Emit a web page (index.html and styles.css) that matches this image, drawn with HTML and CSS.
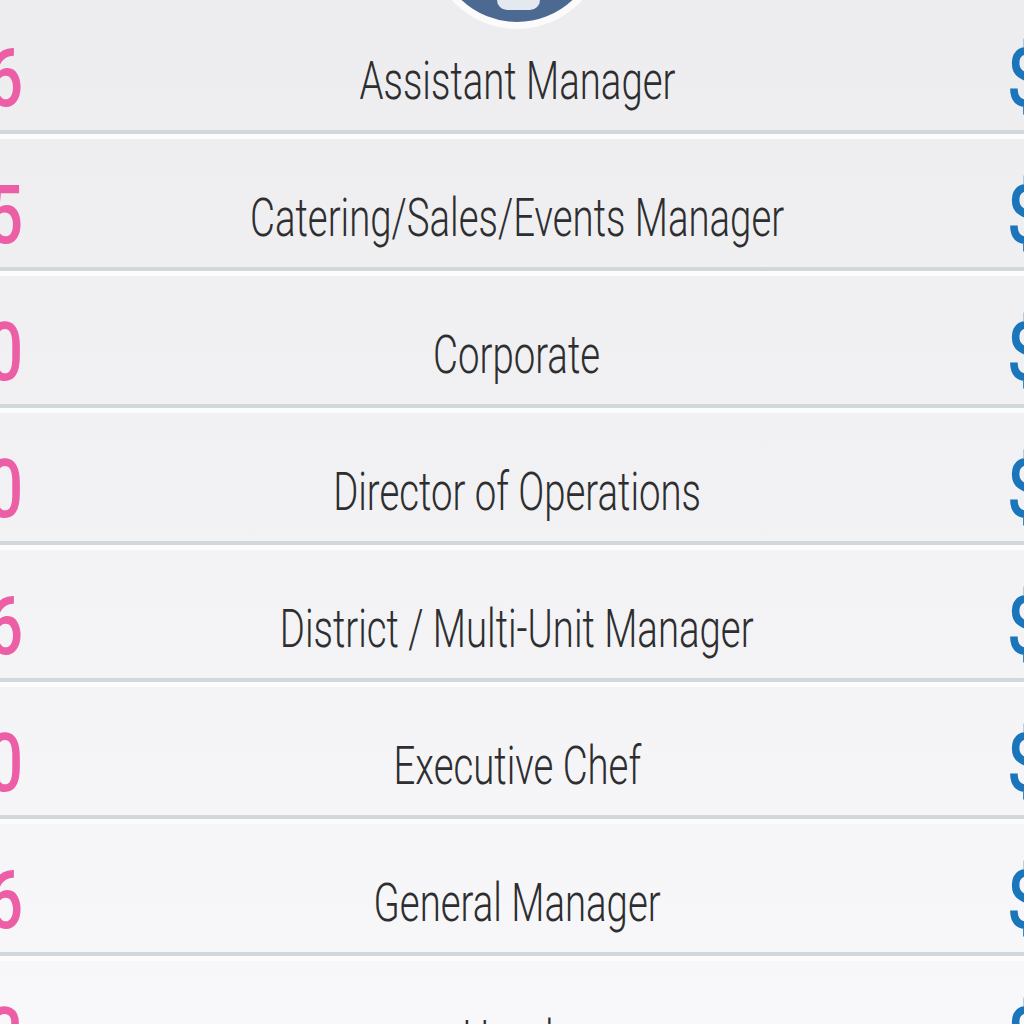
FILE: index.html
```html
<!DOCTYPE html>
<html lang="en">
<head>
<meta charset="utf-8">
<title>Salary by Position</title>
<link rel="stylesheet" href="styles.css">
</head>
<body>
<div class="page">
  <div class="avatar">
    <svg class="avatar-icon" width="162" height="162" viewBox="0 0 162 162" aria-hidden="true">
      <rect x="61" y="88" width="43" height="62" rx="10" fill="#e4e9f0"/>
    </svg>
  </div>
  <div class="table">
    <div class="row"><div class="count">1,236</div><div class="title"><span>Assistant Manager</span></div><div class="pay">$52,400</div></div>
    <div class="row"><div class="count">475</div><div class="title"><span>Catering/Sales/Events Manager</span></div><div class="pay">$55,100</div></div>
    <div class="row"><div class="count">310</div><div class="title"><span>Corporate</span></div><div class="pay">$78,900</div></div>
    <div class="row"><div class="count">120</div><div class="title"><span>Director of Operations</span></div><div class="pay">$96,300</div></div>
    <div class="row"><div class="count">256</div><div class="title"><span>District / Multi-Unit Manager</span></div><div class="pay">$85,700</div></div>
    <div class="row"><div class="count">380</div><div class="title"><span>Executive Chef</span></div><div class="pay">$63,200</div></div>
    <div class="row"><div class="count">1,926</div><div class="title"><span>General Manager</span></div><div class="pay">$64,800</div></div>
    <div class="row"><div class="count">913</div><div class="title"><span>Hourly</span></div><div class="pay">$24,500</div></div>
  </div>
</div>
</body>
</html>
```
FILE: styles.css
```css
html, body {
  margin: 0;
  padding: 0;
}

body {
  background: #f8f8fa;
  font-family: Roboto, "Liberation Sans", sans-serif;
}

.page {
  position: relative;
  width: 1024px;
  height: 1024px;
  overflow: hidden;
  background: linear-gradient(to bottom, #ededef 0%, #f2f2f4 50%, #f8f8fa 100%);
}

.avatar {
  position: absolute;
  left: 429px;
  top: -147px;
  width: 162px;
  height: 162px;
  border: 7px solid #fbfbfc;
  border-radius: 50%;
  background: #4c6a91;
  overflow: hidden;
  z-index: 2;
}

.avatar-icon {
  display: block;
}

.table {
  margin-left: -200px;
  width: 1424px;
  padding-top: 2px;
}

.row {
  display: grid;
  grid-template-columns: 220px 987px 217px;
  align-items: end;
  height: 128px;
  border-bottom: 4px solid #d2d7dc;
}

.row + .row {
  border-top: 5px solid #fcfcfd;
}

.count,
.pay {
  font-size: 82px;
  font-weight: 500;
  line-height: 1;
  padding-bottom: 11px;
  white-space: nowrap;
}

.count {
  color: #ec5ea5;
  text-align: right;
  transform: scaleX(0.78);
  transform-origin: right center;
  margin-right: -3px;
}

.pay {
  color: #1b75bb;
  text-align: left;
  transform: scaleX(0.78);
  transform-origin: left center;
}

.title {
  padding-left: 7px;
  padding-bottom: 22px;
  text-align: center;
  white-space: nowrap;
}

.title span {
  display: inline-block;
  font-size: 54px;
  font-weight: 300;
  line-height: 1;
  color: #2e2e30;
  transform: scaleX(0.71);
  transform-origin: center;
}
```
